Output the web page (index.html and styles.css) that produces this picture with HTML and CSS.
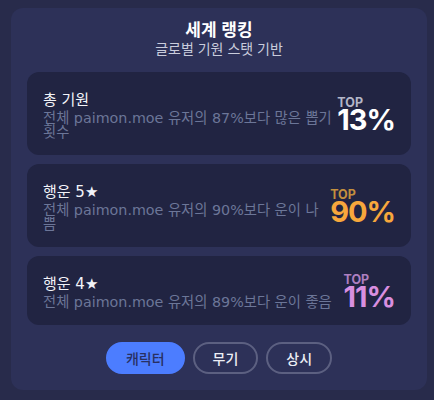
FILE: index.html
```html
<!DOCTYPE html>
<html lang="ko">
<head>
<meta charset="utf-8">
<link rel="stylesheet" href="styles.css">
</head>
<body>
<section class="panel">
  <header class="head">
    <h1 class="title">세계 랭킹</h1>
    <p class="subtitle">글로벌 기원 스탯 기반</p>
  </header>
  <div class="cards">
    <div class="card">
      <div class="info">
        <div class="name">총 기원</div>
        <div class="desc">전체 paimon.moe 유저의 87%보다 많은 뽑기 횟수</div>
      </div>
      <div class="rank rank-white">
        <span class="top">TOP</span>
        <span class="pct">13%</span>
      </div>
    </div>
    <div class="card">
      <div class="info">
        <div class="name">행운 5★</div>
        <div class="desc">전체 paimon.moe 유저의 90%보다 운이 나쁨</div>
      </div>
      <div class="rank rank-gold">
        <span class="top">TOP</span>
        <span class="pct">90%</span>
      </div>
    </div>
    <div class="card">
      <div class="info">
        <div class="name">행운 4★</div>
        <div class="desc">전체 paimon.moe 유저의 89%보다 운이 좋음</div>
      </div>
      <div class="rank rank-purple">
        <span class="top">TOP</span>
        <span class="pct">11%</span>
      </div>
    </div>
  </div>
  <nav class="tabs">
    <button class="tab active">캐릭터</button>
    <button class="tab">무기</button>
    <button class="tab">상시</button>
  </nav>
</section>
</body>
</html>
```
FILE: styles.css
```css
* { box-sizing: border-box; }
html, body { margin: 0; }
body {
  background: #282b4b;
  padding: 8px 7px 10px 11px;
  font-family: "DejaVu Sans", "Noto Sans CJK KR", sans-serif;
  color: #eef0f6;
}
.panel {
  background: #2d3158;
  border-radius: 12px;
  padding: 10px 16px 16px;
  display: flex;
  flex-direction: column;
}
.head {
  display: flex;
  flex-direction: column;
  align-items: center;
}
.title {
  margin: 0;
  font-size: 17px;
  line-height: 22px;
  font-weight: 700;
  color: #ffffff;
  font-family: "Noto Sans CJK KR", sans-serif;
}
.subtitle {
  margin: 0;
  font-size: 14px;
  line-height: 16px;
  color: #c9ccdc;
  font-family: "Noto Sans CJK KR", sans-serif;
}
.cards {
  margin-top: 16px;
  display: flex;
  flex-direction: column;
  gap: 9px;
}
.card {
  background: #212442;
  border-radius: 12px;
  padding: 17px 16px 16px;
  display: flex;
  align-items: center;
  gap: 3px;
}
.info {
  flex: 1;
  min-width: 0;
  display: flex;
  flex-direction: column;
}
.name {
  font-size: 15px;
  line-height: 22px;
  color: #f2f3f8;
}
.desc {
  font-size: 14.3px;
  line-height: 14px;
  color: #6c7698;
}
.rank {
  display: flex;
  flex-direction: column;
  align-items: flex-start;
  font-family: "Inter", sans-serif;
  font-weight: 700;
}
.top {
  font-size: 12.5px;
  line-height: 12px;
  font-weight: 700;
}
.pct {
  font-size: 29px;
  line-height: 22px;
  letter-spacing: -1px;
}
.rank-white .top { color: #b3b6c8; }
.rank-white .pct { color: #ffffff; }
.rank-gold .top { color: #c38f3e; }
.rank-gold .pct { color: #f7a73c; }
.rank-purple .top { color: #ad7fc0; }
.rank-purple .pct { color: #d98fe0; }
.tabs {
  margin-top: 17px;
  display: flex;
  justify-content: center;
  gap: 8px;
}
.tab {
  font-family: "Noto Sans CJK KR", sans-serif;
  font-size: 14px;
  line-height: 20px;
  font-weight: 500;
  padding: 4px 18px;
  border-radius: 999px;
  border: 2px solid #5c6081;
  background: transparent;
  color: #eceef5;
  cursor: pointer;
}
.tab.active {
  background: #4c7dff;
  border-color: #4c7dff;
  color: #283063;
}
```
